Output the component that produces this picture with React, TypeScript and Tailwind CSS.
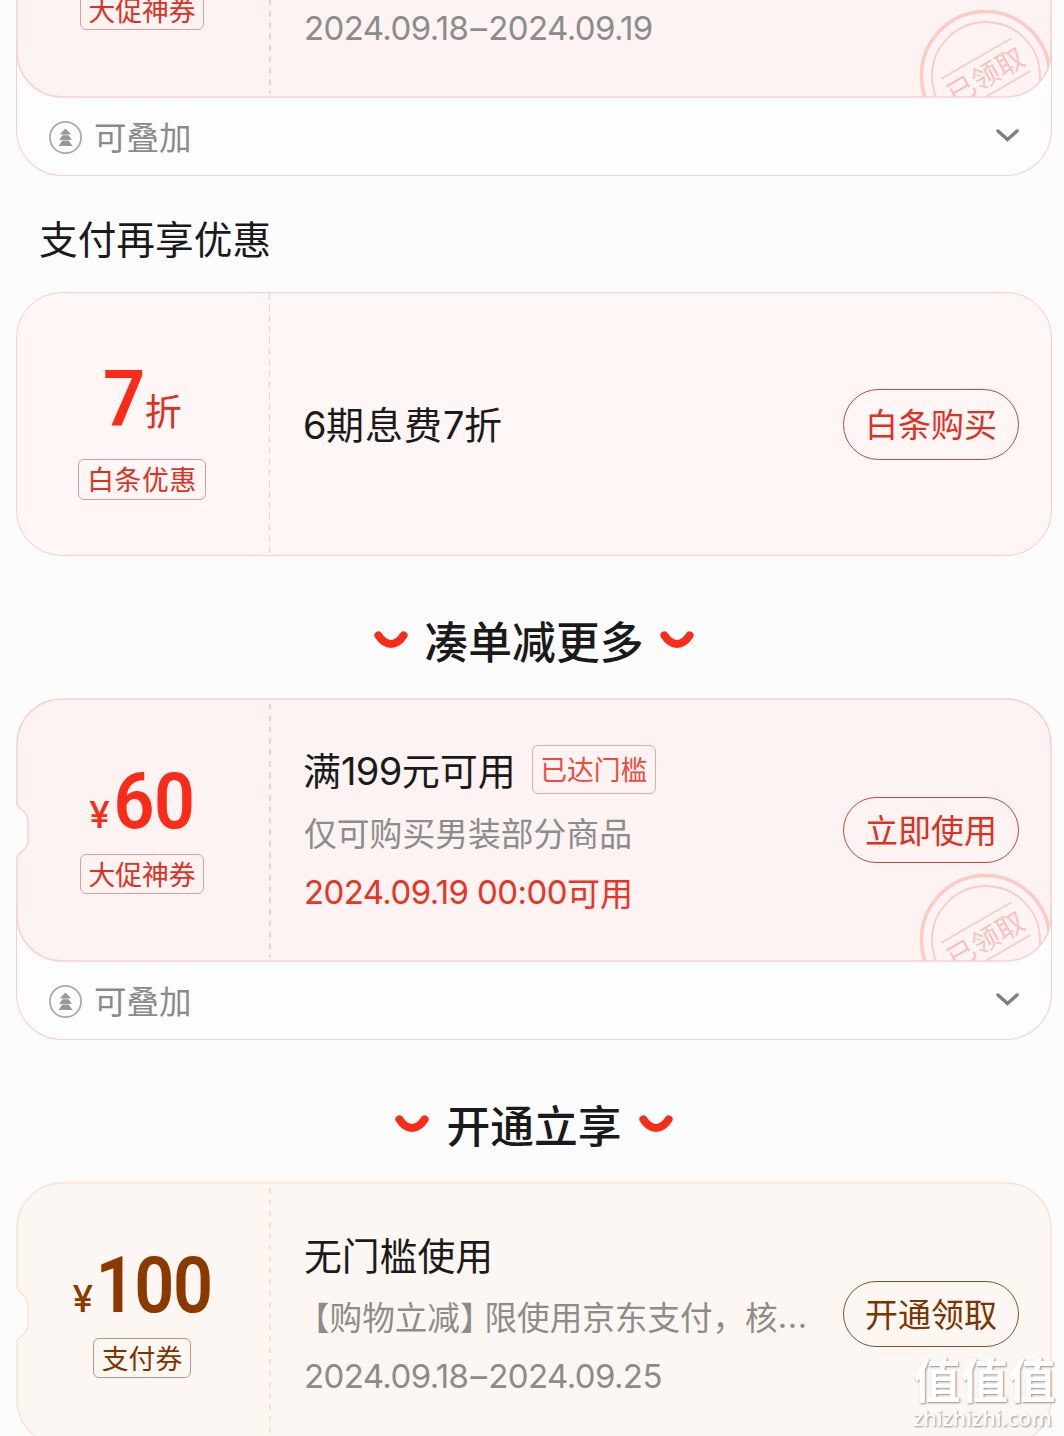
import type { ReactNode } from 'react';

const COUPON_PATH =
  'M46 1 H990 A45 45 0 0 1 1035 46 V218 A45 45 0 0 1 990 263 H46 A45 45 0 0 1 1 218 V160 Q1 157 4 155 Q12 150 12 143 V123 Q12 116 4 110 Q1 108 1 105 V46 A45 45 0 0 1 46 1 Z';

const themes = {
  red: { fill: '#fdf3f2', stroke: '#f9d0cd', dash: '#f6cccb', amount: 'text-[#fa2c19]', text: 'text-[#e0301f]', tag: 'border-[#e39d97]', button: 'border-[#c4473c]' },
  gold: { fill: '#fdf7f3', stroke: '#fce2cf', dash: '#fbdfca', amount: 'text-[#8a3a00]', text: 'text-[#7c3400]', tag: 'border-[#bb9886]', button: 'border-[#82512f]' },
};

type Theme = keyof typeof themes;

function Num({ children }: { children: ReactNode }) {
  return <span className="font-['Inter','Noto_Sans_CJK_SC',sans-serif] tracking-[-0.6px]">{children}</span>;
}

function DateRange({ from, to }: { from: string; to: string }) {
  return (
    <Num>
      {from}
      <span className="mx-[2px]">–</span>
      {to}
    </Num>
  );
}

function Stamp() {
  return (
    <g stroke="#fa2c19" strokeOpacity="0.2" fill="none">
      <circle cx="969.5" cy="241.5" r="64" strokeWidth="3.5" />
      <circle cx="970" cy="242" r="54" strokeWidth="1.8" />
      <g transform="rotate(-30 970 242)" strokeWidth="1.8">
        <path d="M930 222 H1011 M930 260 H1011" />
        <text
          x="970"
          y="252"
          textAnchor="middle"
          stroke="none"
          fill="#fa2c19"
          fillOpacity="0.27"
          className="font-['Noto_Sans_CJK_SC',sans-serif] text-[28px]"
        >
          已领取
        </text>
      </g>
    </g>
  );
}

type CouponProps = {
  theme: Theme;
  amount: string;
  tag: string;
  button: string;
  stamped?: boolean;
  children: ReactNode;
};

function Coupon({ theme, amount, tag, button, stamped, children }: CouponProps) {
  const t = themes[theme];
  return (
    <div className="relative h-[264px] w-full">
      <svg className="absolute inset-0" width="1036" height="264" viewBox="0 0 1036 264">
        <clipPath id="coupon">
          <path d={COUPON_PATH} />
        </clipPath>
        <path d={COUPON_PATH} fill={t.fill} />
        <path d="M254 6 V259" stroke={t.dash} strokeWidth="2" strokeDasharray="5.5 5.9" />
        {stamped && (
          <g clipPath="url(#coupon)">
            <Stamp />
          </g>
        )}
        <path d={COUPON_PATH} fill="none" stroke={t.stroke} strokeWidth="1.5" />
      </svg>
      <div className="relative flex h-full">
        <div className="flex w-[252px] flex-col items-center pt-[64px]">
          <div className={`flex h-[80px] items-baseline ${t.amount}`}>
            <span className="mr-[3px] font-['Inter'] text-[37px] leading-[80px] font-medium">¥</span>
            <span className={`inline-block font-['Roboto'] text-[78px] leading-[80px] font-semibold ${amount.length > 2 ? '-mx-[7px] scale-x-90 tracking-[-1.5px]' : '-mx-[3px] scale-x-92 tracking-[-0.5px]'}`}>
              {amount}
            </span>
          </div>
          <Tag className={`mt-[12px] h-[40px] px-[7.5px] ${t.text} ${t.tag}`}>{tag}</Tag>
        </div>
        <div className="flex flex-1 flex-col pt-[42px] pl-[36px]">{children}</div>
        <div className="flex items-center pr-[33px]">
          <Pill className={`h-[66px] ${t.text} ${t.button}`}>{button}</Pill>
        </div>
      </div>
    </div>
  );
}

function Tag({ className, children }: { className: string; children: ReactNode }) {
  return (
    <span className={`flex items-center justify-center rounded-[6px] border text-[26.8px] leading-none whitespace-nowrap ${className}`}>
      {children}
    </span>
  );
}

function Pill({ className, children }: { className: string; children: ReactNode }) {
  return (
    <button className={`flex w-[176px] items-center justify-center rounded-full border pb-[1px] text-[33px] leading-none ${className}`}>
      {children}
    </button>
  );
}

function StackFooter() {
  return (
    <div className="-mt-[56px] flex h-[134px] items-start justify-between rounded-b-[46px] border border-t-0 border-[#f9cfcc] bg-[#fdfdfd] pt-[56px] pr-[32px] pl-[32px] text-[#8a8a8a]">
      <div className="flex h-[78px] items-center gap-[12px]">
        <svg width="33" height="33" viewBox="0 0 33 33">
          <circle cx="16.5" cy="16.5" r="15.6" fill="none" stroke="#a9a9a9" strokeWidth="1.7" />
          <path
            d="M16.5 7.5 L22.5 13.5 H19 L23 19 H19.5 L23.5 25 H9.5 L13.5 19 H10 L14 13.5 H10.5 Z"
            fill="#989898"
          />
          <path d="M9.5 13.9 H23.5 M9.5 19.4 H23.5" stroke="#fdfdfd" strokeWidth="0.6" />
        </svg>
        <span className="pb-[2px] text-[32.5px] leading-none">可叠加</span>
      </div>
      <svg className="mt-[31px]" width="23" height="14" viewBox="0 0 23 14">
        <path d="M2 2 L11.5 10.5 L21 2" fill="none" stroke="#808080" strokeWidth="3.4" strokeLinecap="round" />
      </svg>
    </div>
  );
}

function Smile() {
  return (
    <svg className="mb-[2px]" width="34" height="20" viewBox="0 0 34 20">
      <path d="M4.4 5.4 C8 11 12 14 17 14 S26 11 29.6 5.4" fill="none" stroke="#fa2c19" strokeWidth="8" strokeLinecap="round" />
    </svg>
  );
}

function SectionTitle({ children }: { children: ReactNode }) {
  return (
    <div className="flex h-[142px] items-center justify-center gap-[17px] pt-[28px]">
      <Smile />
      <h2 className="pb-[1px] text-[43.8px] leading-none font-medium text-[#1a1a1a]">{children}</h2>
      <Smile />
    </div>
  );
}

function Watermark() {
  return (
    <div className="absolute top-[1349px] left-[913px] w-[146px] text-white [text-shadow:1px_1px_2px_#8f8f8f]">
      <div className="text-[47.5px] leading-[58px] font-bold whitespace-nowrap">值值值</div>
      <div className="font-['Noto_Sans'] text-[21.5px] leading-[22px] font-medium">zhizhizhi.com</div>
    </div>
  );
}

export default function App() {
  return (
    <div className="relative h-[1436px] w-[1064px] overflow-hidden bg-[#fcfcfc] pr-[12px] pl-[16px] font-['Noto_Sans_CJK_SC',sans-serif] text-[#1a1a1a]">
      <div className="-mt-[166px]">
        <div className="relative z-10">
          <Coupon theme="red" amount="60" tag="大促神券" button="立即使用" stamped>
            <div className="h-[124px]" />
            <p className="flex h-[56px] items-center text-[33px] leading-none text-[#8c8c8c]">
              <DateRange from="2024.09.18" to="2024.09.19" />
            </p>
          </Coupon>
        </div>
        <StackFooter />
      </div>

      <h3 className="flex h-[116px] items-center pt-[6px] pl-[23px] text-[38.7px] leading-none">支付再享优惠</h3>

      <div className="flex h-[264px] rounded-[46px] border border-[#f5cfcc] bg-[#fff6f5]">
        <div className="flex w-[250px] flex-col items-center pt-[67px] text-[#fa2c19]">
          <div className="flex h-[80px] items-baseline">
            <span className="inline-block scale-x-95 font-['Roboto'] text-[78px] leading-[80px] font-semibold">7</span>
            <span className="-ml-[2px] text-[37px] leading-[80px] text-[#e0301f]">折</span>
          </div>
          <Tag className="mt-[19px] h-[41px] w-[128px] border-[#d99c97] pb-[1px] tracking-[0.6px] text-[#e0301f]">白条优惠</Tag>
        </div>
        <svg className="ml-[1px]" width="2" height="262" viewBox="0 0 2 262">
          <path d="M1.5 0 V262" stroke="#f3cfce" strokeWidth="1.2" strokeDasharray="7 4" />
        </svg>
        <div className="flex flex-1 items-center justify-between pr-[32px] pl-[33px]">
          <p className="text-[38px] leading-none">
            <Num>6</Num>
            <span className="tracking-[1px]">期息费</span>
            <Num>7</Num>折
          </p>
          <Pill className="h-[71px] border-[#c4473c] text-[#e0301f]">白条购买</Pill>
        </div>
      </div>

      <SectionTitle>凑单减更多</SectionTitle>

      <div className="relative z-10">
        <Coupon theme="red" amount="60" tag="大促神券" button="立即使用" stamped>
          <div className="-ml-[1px] flex h-[62px] items-center gap-[16px] pb-[4px] text-[38px] leading-none">
            <span className="pt-[2px]">
              满<Num>199</Num>元可用
            </span>
            <Tag className="h-[49px] w-[124px] border-[#eda8a2] text-[#f04a3c]">已达门槛</Tag>
          </div>
          <p className="flex h-[62px] items-center pb-[2px] text-[32.8px] leading-none text-[#8c8c8c]">仅可购买男装部分商品</p>
          <p className="flex h-[56px] items-center text-[33px] leading-none text-[#ea3323]">
            <Num>2024.09.19 00:00</Num>可用
          </p>
        </Coupon>
      </div>
      <StackFooter />

      <SectionTitle>开通立享</SectionTitle>

      <Coupon theme="gold" amount="100" tag="支付券" button="开通领取">
        <p className="flex h-[62px] items-center pb-[3px] text-[37.8px] leading-none">无门槛使用</p>
        <p className="flex h-[62px] items-center pb-[2px] text-[32.6px] leading-none whitespace-nowrap text-[#8f8b88]">
          <span className="-ml-[7px]">【购物立减】</span>
          <span className="-ml-[8px]">限使用京东支付，核</span>
          <span className="font-['Inter'] tracking-[0.6px]">...</span>
        </p>
        <p className="flex h-[56px] items-center text-[33px] leading-none text-[#8f8b88]">
          <DateRange from="2024.09.18" to="2024.09.25" />
        </p>
      </Coupon>

      <Watermark />
    </div>
  );
}
